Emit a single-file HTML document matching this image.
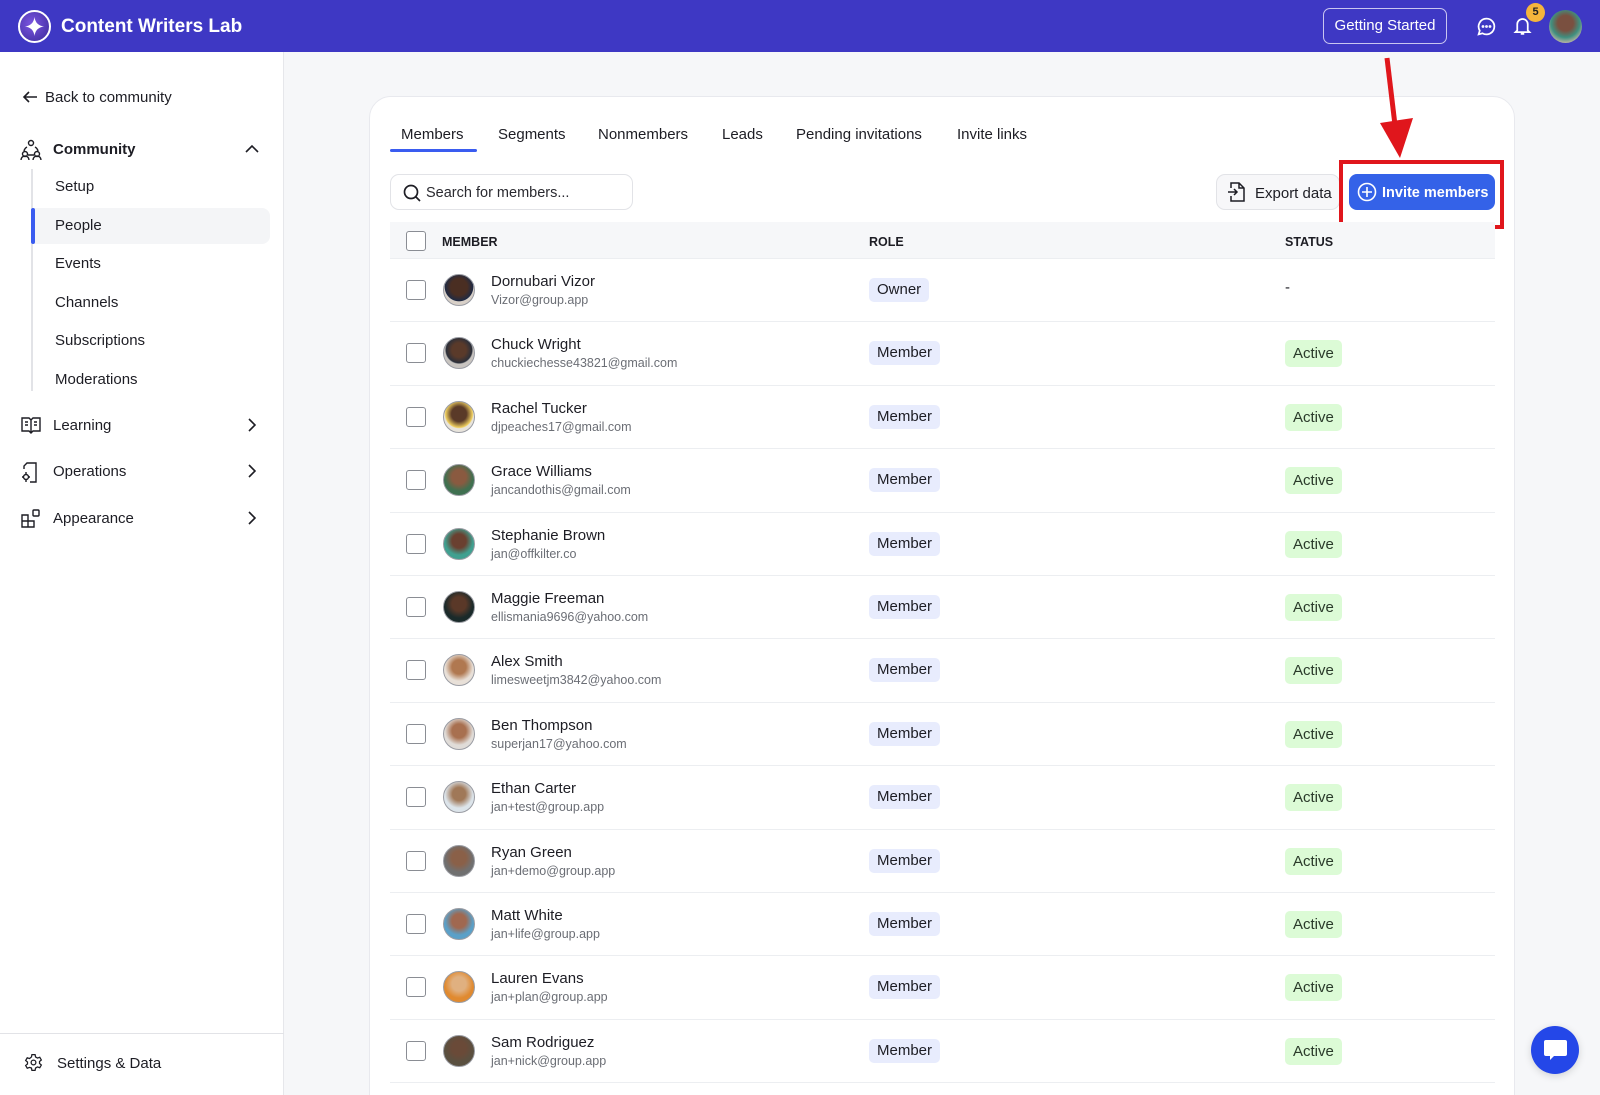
<!DOCTYPE html>
<html style="width:1600px;height:1095px;overflow:hidden"><head><meta charset="utf-8"><style>
*{box-sizing:border-box;margin:0;padding:0}
body{width:1600px;height:1095px;overflow:hidden;background:#f6f7f9;font-family:"Liberation Sans",sans-serif;color:#1d1d24;position:relative}
#wrap{position:absolute;left:0;top:0;width:1600px;height:1095px;overflow:hidden}
.hdr{position:absolute;left:0;top:0;width:1600px;height:52px;background:#3e38c4}
.abs{position:absolute}
.side{position:absolute;left:0;top:52px;width:284px;height:1043px;background:#fff;border-right:1px solid #e6e7eb}
.si{position:absolute;font-size:15px;color:#1d1d24;line-height:18px}
.card{position:absolute;left:369px;top:96px;width:1146px;height:1040px;background:#fff;border:1px solid #e8e9ee;border-radius:22px}
.tab{position:absolute;top:126px;font-size:15px;color:#1d1d24}
.row{position:absolute;left:390px;width:1105px;height:63.4px;border-bottom:1px solid #eceef1;background:#fff}
.cb{position:absolute;left:16px;top:21px;width:20px;height:20px;border:1.5px solid #8a8d94;border-radius:3px;background:#fff}
.av{position:absolute;left:53px;top:15px;width:32px;height:32px;border-radius:50%;border:1.5px solid #9a9ca3}
.nm{position:absolute;left:101px;top:14px;font-size:15px;color:#1d1d24}
.em{position:absolute;left:101px;top:34px;font-size:12.5px;color:#6b6e75}
.role{position:absolute;left:479px;top:19px;height:24px;line-height:24px;padding:0 8px;background:#e8ecfd;border-radius:5px;font-size:15px}
.st{position:absolute;left:895px;top:18px;height:27px;line-height:27px;padding:0 8px;background:#dcfbd6;border-radius:5px;font-size:15px;color:#2a3a2a}
</style></head><body><div id="wrap">
<div class="hdr">
 <div class="abs" style="left:18px;top:10px;width:33px;height:33px;border-radius:50%;background:radial-gradient(circle at 40% 40%,#7b55e0,#3a2a9a);border:2.5px solid #fff"></div>
 <svg class="abs" style="left:24px;top:16px" width="21" height="21" viewBox="0 0 20 20"><path d="M10 1 Q11 9 19 10 Q11 11 10 19 Q9 11 1 10 Q9 9 10 1Z" fill="#fff"/></svg>
 <div class="abs" style="left:61px;top:16px;color:#fff;font-size:19px;font-weight:bold">Content Writers Lab</div>
 <div class="abs" style="left:1323px;top:8px;width:124px;height:36px;border:1.5px solid #c9c6f0;border-radius:7px;color:#fff;font-size:15px;text-align:center;line-height:34px">Getting Started</div>
 <svg class="abs" style="left:1476px;top:16px" width="21" height="21" viewBox="0 0 24 24" fill="none" stroke="#fff" stroke-width="2"><path d="M12 3a9 9 0 1 1-4.5 16.8L3 21l1.3-4.3A9 9 0 0 1 12 3z"/><circle cx="8" cy="12" r=".6" fill="#fff"/><circle cx="12" cy="12" r=".6" fill="#fff"/><circle cx="16" cy="12" r=".6" fill="#fff"/></svg>
 <svg class="abs" style="left:1512px;top:15px" width="21" height="22" viewBox="0 0 24 24" fill="none" stroke="#fff" stroke-width="2"><path d="M6 17V10a6 6 0 0 1 12 0v7l2 2H4z"/><path d="M10 21h4"/></svg>
 <div class="abs" style="left:1526px;top:3px;width:19px;height:19px;border-radius:50%;background:#f5b53c;color:#222;font-size:11px;font-weight:bold;text-align:center;line-height:19px">5</div>
 <div class="abs" style="left:1549px;top:10px;width:33px;height:33px;border-radius:50%;background:radial-gradient(circle at 50% 40%,#7a5040 0 30%,#3f8f7f 55%,#c9b8a8 80%)"></div>
</div>
<div class="side">
 <svg class="abs" style="left:22px;top:37px" width="16" height="16" viewBox="0 0 16 16" fill="none" stroke="#1d1d24" stroke-width="1.6"><path d="M15 8H2M7 3 2 8l5 5"/></svg>
 <div class="si" style="left:45px;top:37px">Back to community</div>
 <svg class="abs" style="left:20px;top:87px" width="22" height="22" viewBox="0 0 22 22" fill="none" stroke="#1d1d24" stroke-width="1.4"><circle cx="11" cy="4" r="2.5"/><circle cx="5" cy="15" r="2.5"/><circle cx="17" cy="15" r="2.5"/><path d="M1 21a4 4 0 0 1 8 0M13 21a4 4 0 0 1 8 0M7 8a6 6 0 0 0-3 4M15 8a6 6 0 0 1 3 4M8 16h6"/></svg>
 <div class="si" style="left:53px;top:89px;font-weight:bold">Community</div>
 <svg class="abs" style="left:245px;top:92px" width="14" height="10" viewBox="0 0 14 10" fill="none" stroke="#1d1d24" stroke-width="1.6"><path d="M1 8l6-6 6 6"/></svg>
 <div class="abs" style="left:31px;top:117px;width:2px;height:222px;background:#e2e3e7"></div>
 <div class="abs" style="left:31px;top:156px;width:239px;height:36px;background:#f4f5f7;border-radius:0 8px 8px 0"></div>
 <div class="abs" style="left:31px;top:156px;width:4px;height:36px;background:#3a5cf0;border-radius:2px"></div>
 <div class="si" style="left:55px;top:126px">Setup</div>
 <div class="si" style="left:55px;top:165px">People</div>
 <div class="si" style="left:55px;top:203px">Events</div>
 <div class="si" style="left:55px;top:242px">Channels</div>
 <div class="si" style="left:55px;top:280px">Subscriptions</div>
 <div class="si" style="left:55px;top:319px">Moderations</div>
 <svg class="abs" style="left:21px;top:365px" width="20" height="17" viewBox="0 0 20 17" fill="none" stroke="#1d1d24" stroke-width="1.4"><path d="M1 1h7l2 2 2-2h7v13h-7l-2 2-2-2H1zM10 3v13M4 5h3M4 8h3M13 5h3M13 8h3"/></svg>
 <div class="si" style="left:53px;top:365px">Learning</div>
 <svg class="abs" style="left:21px;top:410px" width="18" height="21" viewBox="0 0 18 21" fill="none" stroke="#1d1d24" stroke-width="1.4"><path d="M3 7V4l3-3h9v19H9"/><circle cx="5" cy="15" r="2.5"/><path d="M5 10v2M5 18v2M1 15h2M7 15h2"/></svg>
 <div class="si" style="left:53px;top:411px">Operations</div>
 <svg class="abs" style="left:21px;top:457px" width="19" height="19" viewBox="0 0 19 19" fill="none" stroke="#1d1d24" stroke-width="1.4"><path d="M1 6h6v6H1zM1 12h6v6H1zM7 12h6v6H7z"/><rect x="12" y="1" width="6" height="6" rx="1"/></svg>
 <div class="si" style="left:53px;top:458px">Appearance</div>
 <svg class="abs" style="left:248px;top:366px" width="8" height="14" viewBox="0 0 8 14" fill="none" stroke="#1d1d24" stroke-width="1.6"><path d="M1 1l6 6-6 6"/></svg>
 <svg class="abs" style="left:248px;top:412px" width="8" height="14" viewBox="0 0 8 14" fill="none" stroke="#1d1d24" stroke-width="1.6"><path d="M1 1l6 6-6 6"/></svg>
 <svg class="abs" style="left:248px;top:459px" width="8" height="14" viewBox="0 0 8 14" fill="none" stroke="#1d1d24" stroke-width="1.6"><path d="M1 1l6 6-6 6"/></svg>
 <div class="abs" style="left:0;top:981px;width:284px;height:1px;background:#e2e3e7"></div>
 <svg class="abs" style="left:24px;top:1001px" width="19" height="19" viewBox="0 0 24 24" fill="none" stroke="#1d1d24" stroke-width="1.6"><circle cx="12" cy="12" r="3"/><path d="M10 2h4l.6 3 2.4 1.4 2.9-1 2 3.4-2.3 2v2.4l2.3 2-2 3.4-2.9-1-2.4 1.4-.6 3h-4l-.6-3L7 18.2l-2.9 1-2-3.4 2.3-2v-2.4l-2.3-2 2-3.4 2.9 1L9.4 5z"/></svg>
 <div class="si" style="left:57px;top:1003px">Settings &amp; Data</div>
</div>
<div class="card"></div>
<div class="tab" style="left:401px">Members</div>
<div class="tab" style="left:498px">Segments</div>
<div class="tab" style="left:598px">Nonmembers</div>
<div class="tab" style="left:722px">Leads</div>
<div class="tab" style="left:796px">Pending invitations</div>
<div class="tab" style="left:957px">Invite links</div>
<div class="abs" style="left:390px;top:149px;width:87px;height:3px;background:#3a5cf0;border-radius:2px"></div>
<div class="abs" style="left:390px;top:174px;width:243px;height:36px;border:1px solid #e2e3e7;border-radius:9px"></div>
<svg class="abs" style="left:403px;top:184px" width="18" height="18" viewBox="0 0 18 18" fill="none" stroke="#1d1d24" stroke-width="1.7"><circle cx="8" cy="8" r="6.5"/><path d="M13 13l4 4"/></svg>
<div class="abs" style="left:426px;top:185px;font-size:14.5px;color:#2a2a30">Search for members...</div>
<div class="abs" style="left:1216px;top:174px;width:124px;height:36px;border:1px solid #e2e3e7;border-radius:9px;background:#f7f7f9"></div>
<svg class="abs" style="left:1227px;top:182px" width="18" height="20" viewBox="0 0 18 20" fill="none" stroke="#1d1d24" stroke-width="1.5"><path d="M4 6V1h8l5 5v13H4v-5M12 1v5h5M1 10h9M7 7l3 3-3 3"/></svg>
<div class="abs" style="left:1255px;top:185px;font-size:15px">Export data</div>
<div class="abs" style="left:1339px;top:160px;width:165px;height:69px;border:4px solid #e0161c"></div>
<div class="abs" style="left:1349px;top:174px;width:146px;height:36px;background:#3462e8;border-radius:8px"></div>
<svg class="abs" style="left:1357px;top:182px" width="20" height="20" viewBox="0 0 20 20" fill="none" stroke="#fff" stroke-width="1.6"><circle cx="10" cy="10" r="8.5"/><path d="M10 5v10M5 10h10"/></svg>
<div class="abs" style="left:1382px;top:185px;font-size:14.5px;color:#fff;font-weight:bold">Invite members</div>
<svg class="abs" style="left:1375px;top:55px" width="50" height="106" viewBox="0 0 50 106"><path d="M12 3 L20 70" stroke="#e0161c" stroke-width="5"/><path d="M5 68 L38 63 L25 103Z" fill="#e0161c"/></svg>
<div class="abs" style="left:390px;top:222px;width:1105px;height:37px;background:#f6f7f9;border-bottom:1px solid #eceef1"></div>
<div class="abs" style="left:406px;top:231px;width:20px;height:20px;border:1.5px solid #8a8d94;border-radius:3px;background:#fff"></div>
<div class="abs" style="left:442px;top:235px;font-size:12.5px;font-weight:bold">MEMBER</div>
<div class="abs" style="left:869px;top:235px;font-size:12.5px;font-weight:bold">ROLE</div>
<div class="abs" style="left:1285px;top:235px;font-size:12.5px;font-weight:bold">STATUS</div>

<div class="row" style="top:259px"><div class="cb"></div><div class="av" style="background:radial-gradient(circle at 50% 40%,#4a2e22 0 35%,#1e2a44 60%,#d8d0c8 62%)"></div><div class="nm">Dornubari Vizor</div><div class="em">Vizor@group.app</div><div class="role">Owner</div><div class="abs" style="left:895px;top:20px;font-size:15px">-</div></div>
<div class="row" style="top:322.4px"><div class="cb"></div><div class="av" style="background:radial-gradient(circle at 50% 40%,#5a3a2a 0 30%,#2a2f3a 55%,#c8c4c0 60%)"></div><div class="nm">Chuck Wright</div><div class="em">chuckiechesse43821@gmail.com</div><div class="role">Member</div><div class="st">Active</div></div>
<div class="row" style="top:385.8px"><div class="cb"></div><div class="av" style="background:radial-gradient(circle at 50% 40%,#5a3a28 0 32%,#f0d060 58%,#e8e4dc 62%)"></div><div class="nm">Rachel Tucker</div><div class="em">djpeaches17@gmail.com</div><div class="role">Member</div><div class="st">Active</div></div>
<div class="row" style="top:449.2px"><div class="cb"></div><div class="av" style="background:radial-gradient(circle at 50% 40%,#8a5a40 0 30%,#3f7050 60%)"></div><div class="nm">Grace Williams</div><div class="em">jancandothis@gmail.com</div><div class="role">Member</div><div class="st">Active</div></div>
<div class="row" style="top:512.6px"><div class="cb"></div><div class="av" style="background:radial-gradient(circle at 50% 40%,#6a4030 0 30%,#40a090 60%)"></div><div class="nm">Stephanie Brown</div><div class="em">jan@offkilter.co</div><div class="role">Member</div><div class="st">Active</div></div>
<div class="row" style="top:576px"><div class="cb"></div><div class="av" style="background:radial-gradient(circle at 50% 40%,#5a3828 0 30%,#1a2a2a 60%)"></div><div class="nm">Maggie Freeman</div><div class="em">ellismania9696@yahoo.com</div><div class="role">Member</div><div class="st">Active</div></div>
<div class="row" style="top:639.4px"><div class="cb"></div><div class="av" style="background:radial-gradient(circle at 50% 40%,#b07850 0 30%,#e8e0d8 60%)"></div><div class="nm">Alex Smith</div><div class="em">limesweetjm3842@yahoo.com</div><div class="role">Member</div><div class="st">Active</div></div>
<div class="row" style="top:702.8px"><div class="cb"></div><div class="av" style="background:radial-gradient(circle at 50% 40%,#a87050 0 30%,#e0dcd8 60%)"></div><div class="nm">Ben Thompson</div><div class="em">superjan17@yahoo.com</div><div class="role">Member</div><div class="st">Active</div></div>
<div class="row" style="top:766.2px"><div class="cb"></div><div class="av" style="background:radial-gradient(circle at 50% 40%,#a07858 0 28%,#dce4ea 60%)"></div><div class="nm">Ethan Carter</div><div class="em">jan+test@group.app</div><div class="role">Member</div><div class="st">Active</div></div>
<div class="row" style="top:829.6px"><div class="cb"></div><div class="av" style="background:radial-gradient(circle at 50% 40%,#8a6048 0 30%,#707070 60%)"></div><div class="nm">Ryan Green</div><div class="em">jan+demo@group.app</div><div class="role">Member</div><div class="st">Active</div></div>
<div class="row" style="top:893px"><div class="cb"></div><div class="av" style="background:radial-gradient(circle at 50% 40%,#a06850 0 30%,#5aa0c8 60%)"></div><div class="nm">Matt White</div><div class="em">jan+life@group.app</div><div class="role">Member</div><div class="st">Active</div></div>
<div class="row" style="top:956.4px"><div class="cb"></div><div class="av" style="background:radial-gradient(circle at 50% 40%,#e0b080 0 30%,#e08a30 60%)"></div><div class="nm">Lauren Evans</div><div class="em">jan+plan@group.app</div><div class="role">Member</div><div class="st">Active</div></div>
<div class="row" style="top:1019.8px"><div class="cb"></div><div class="av" style="background:radial-gradient(circle at 50% 40%,#6a4a38 0 30%,#5a5040 60%)"></div><div class="nm">Sam Rodriguez</div><div class="em">jan+nick@group.app</div><div class="role">Member</div><div class="st">Active</div></div>
<div class="row" style="top:1083.2px"><div class="av" style="background:#a0a0a0"></div></div>
<div class="abs" style="left:1531px;top:1026px;width:48px;height:48px;border-radius:50%;background:#2447e8;box-shadow:0 2px 8px rgba(0,0,0,.15)"></div>
<svg class="abs" style="left:1543px;top:1038px" width="25" height="25" viewBox="0 0 25 25"><path d="M3 2h19a2 2 0 0 1 2 2v12a2 2 0 0 1-2 2H11l-4 4v-4H3a2 2 0 0 1-2-2V4a2 2 0 0 1 2-2z" fill="#fff"/></svg>
</div></body></html>
